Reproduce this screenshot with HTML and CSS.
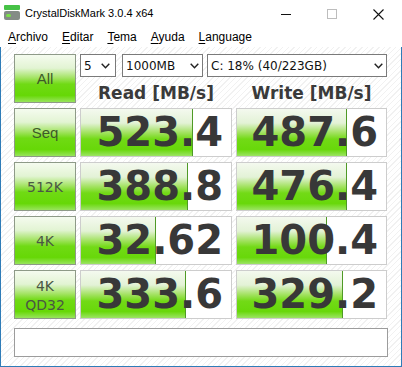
FILE: index.html
```html
<!DOCTYPE html>
<html lang="es">
<head>
    <meta charset="UTF-8">
    <meta name="viewport" content="width=device-width, initial-scale=1.0">
    <title>CrystalDiskMark 3.0.4 x64</title>
    <link rel="stylesheet" href="styles.css">
</head>
<body>
    <div class="window">
        <div class="titlebar">
            <svg class="app-icon" width="16" height="16" viewBox="0 0 16 16">
                <rect x="0" y="0" width="16" height="5" rx="1" fill="#46c246"/>
                <rect x="0" y="6" width="16" height="9" rx="2" fill="#848c86"/>
                <rect x="2" y="9" width="5" height="3" rx="1.5" fill="#7be04a"/>
            </svg>
            <span class="title">CrystalDiskMark 3.0.4 x64</span>
            <div class="controls">
                <span class="ctl">
                    <svg width="10" height="10" viewBox="0 0 10 10"><line x1="0" y1="5.5" x2="10" y2="5.5" stroke="#111" stroke-width="1"/></svg>
                </span>
                <span class="ctl">
                    <svg width="10" height="10" viewBox="0 0 10 10"><rect x="0.5" y="0.5" width="9" height="9" fill="none" stroke="#bdbdbd" stroke-width="1"/></svg>
                </span>
                <span class="ctl">
                    <svg width="11" height="11" viewBox="0 0 11 11"><path d="M0.5 0.5 L10.5 10.5 M10.5 0.5 L0.5 10.5" stroke="#111" stroke-width="1.1"/></svg>
                </span>
            </div>
        </div>

        <nav class="menubar">
            <span><u>A</u>rchivo</span>
            <span><u>E</u>ditar</span>
            <span><u>T</u>ema</span>
            <span><u>A</u>yuda</span>
            <span><u>L</u>anguage</span>
        </nav>

        <div class="client">
            <div class="board">
                <div class="btn btn-main">All</div>
                <div class="top">
                    <div class="selects">
                        <div class="select s-count">
                            <span>5</span>
                            <svg width="9" height="6" viewBox="0 0 9 6"><polyline points="0.7,0.7 4.5,4.8 8.3,0.7" fill="none" stroke="#222" stroke-width="1.4"/></svg>
                        </div>
                        <div class="select s-size">
                            <span>1000MB</span>
                            <svg width="9" height="6" viewBox="0 0 9 6"><polyline points="0.7,0.7 4.5,4.8 8.3,0.7" fill="none" stroke="#222" stroke-width="1.4"/></svg>
                        </div>
                        <div class="select s-drive">
                            <span>C: 18% (40/223GB)</span>
                            <svg width="9" height="6" viewBox="0 0 9 6"><polyline points="0.7,0.7 4.5,4.8 8.3,0.7" fill="none" stroke="#222" stroke-width="1.4"/></svg>
                        </div>
                    </div>
                    <div class="heads">
                        <div>Read [MB/s]</div>
                        <div>Write [MB/s]</div>
                    </div>
                </div>

                <div class="btn btn-main">Seq</div>
                <div class="cell"><div class="bar" style="width: 112px"></div><div class="num">523.4</div></div>
                <div class="cell"><div class="bar" style="width: 110px"></div><div class="num">487.6</div></div>

                <div class="btn">512K</div>
                <div class="cell"><div class="bar" style="width: 107px"></div><div class="num">388.8</div></div>
                <div class="cell"><div class="bar" style="width: 110px"></div><div class="num">476.4</div></div>

                <div class="btn">4K</div>
                <div class="cell"><div class="bar" style="width: 75px"></div><div class="num">32.62</div></div>
                <div class="cell"><div class="bar" style="width: 90px"></div><div class="num">100.4</div></div>

                <div class="btn btn-two">4K<br>QD32</div>
                <div class="cell"><div class="bar" style="width: 105px"></div><div class="num">333.6</div></div>
                <div class="cell"><div class="bar" style="width: 106px"></div><div class="num">329.2</div></div>
            </div>

            <div class="comment"></div>
        </div>
    </div>
</body>
</html>
```

FILE: styles.css
```css
html, body {
    margin: 0;
    padding: 0;
}

body {
    width: 402px;
    height: 367px;
    overflow: hidden;
    background-color: #fff;
    font-family: "Liberation Sans", Arial, sans-serif;
}

.window {
    width: 402px;
    height: 367px;
    display: flex;
    flex-direction: column;
}

/* title bar */
.titlebar {
    height: 30px;
    display: flex;
    align-items: flex-start;
    background-color: #fff;
}

.app-icon {
    margin: 5px 5px 0 4px;
    flex: none;
}

.title {
    font-size: 11px;
    line-height: 14px;
    padding-top: 6px;
    color: #000;
}

.controls {
    margin-left: auto;
    display: flex;
    margin-right: 1px;
}

.ctl {
    width: 46px;
    height: 28px;
    display: flex;
    align-items: center;
    justify-content: center;
}

/* menu */
.menubar {
    height: 17px;
    display: flex;
    padding-left: 1px;
    font-size: 12px;
    line-height: 14px;
    color: #000;
}

.menubar span {
    padding: 0 7px;
}

.menubar u {
    text-decoration-thickness: 1px;
    text-underline-offset: 2px;
}

/* main area */
.client {
    flex: 1;
    border: 1px solid #2f7cb8;
    border-top: none;
    padding: 7px 13px 9px 13px;
    background-color: #fff;
    background-image: repeating-linear-gradient(135deg, #fff 0, #fff 3px, #f1f1f1 3px, #f1f1f1 4px);
    display: flex;
    flex-direction: column;
}

.board {
    display: grid;
    grid-template-columns: 62px 152px 151px;
    grid-auto-rows: 49px;
    column-gap: 4px;
    row-gap: 5px;
}

.btn {
    box-sizing: border-box;
    border: 1px solid #8e9a88;
    background: linear-gradient(#f5fbef 0%, #e2f4d3 28%, #a5e466 48%, #70da14 62%, #66d806 86%, #98e45c 100%);
    display: flex;
    align-items: center;
    justify-content: center;
    text-align: center;
    font-family: "DejaVu Sans", Verdana, sans-serif;
    font-size: 14px;
    color: #4a5744;
}

.btn-main {
    font-family: "Liberation Sans", Arial, sans-serif;
    font-size: 15px;
    color: #3d5a28;
}

.btn-two {
    line-height: 19px;
    padding-top: 2px;
}

.top {
    grid-column: 2 / 4;
    display: flex;
    flex-direction: column;
}

.selects {
    display: flex;
    height: 23px;
}

.select {
    box-sizing: border-box;
    height: 23px;
    border: 1px solid #7a7a7a;
    background-color: #fff;
    display: flex;
    align-items: center;
    justify-content: space-between;
    padding: 1px 5px 0 3px;
    font-family: "DejaVu Sans", Verdana, sans-serif;
    font-size: 12px;
    color: #111;
}

.select svg {
    flex: none;
}

.s-count {
    width: 36px;
    margin-right: 6px;
}

.s-size {
    width: 81px;
    margin-right: 4px;
    padding-right: 3px;
}

.s-drive {
    width: 180px;
    padding-right: 3px;
}

.heads {
    margin-top: auto;
    display: grid;
    grid-template-columns: 152px 151px;
    column-gap: 4px;
    font-family: "DejaVu Sans", Verdana, sans-serif;
    font-weight: bold;
    font-size: 17px;
    line-height: 20px;
    color: #3a3a3a;
    text-align: center;
}

.cell {
    box-sizing: border-box;
    border: 1px solid #cdcdcd;
    background-color: #fff;
    display: grid;
}

.bar,
.num {
    grid-area: 1 / 1;
}

.bar {
    box-sizing: border-box;
    height: 100%;
    border-right: 1px solid #4f9a26;
    background: linear-gradient(#f4f9ef 0%, #e3f2d6 30%, #a3e262 50%, #72da16 64%, #68d80a 86%, #9ce464 100%);
}

.num {
    text-align: right;
    padding-right: 8px;
    font-family: "DejaVu Sans", Verdana, sans-serif;
    font-weight: bold;
    font-size: 40px;
    line-height: 47px;
    color: #383838;
}

.comment {
    margin-top: 9px;
    height: 29px;
    box-sizing: border-box;
    border: 1px solid #9c9c9c;
    background-color: #fff;
}
```
